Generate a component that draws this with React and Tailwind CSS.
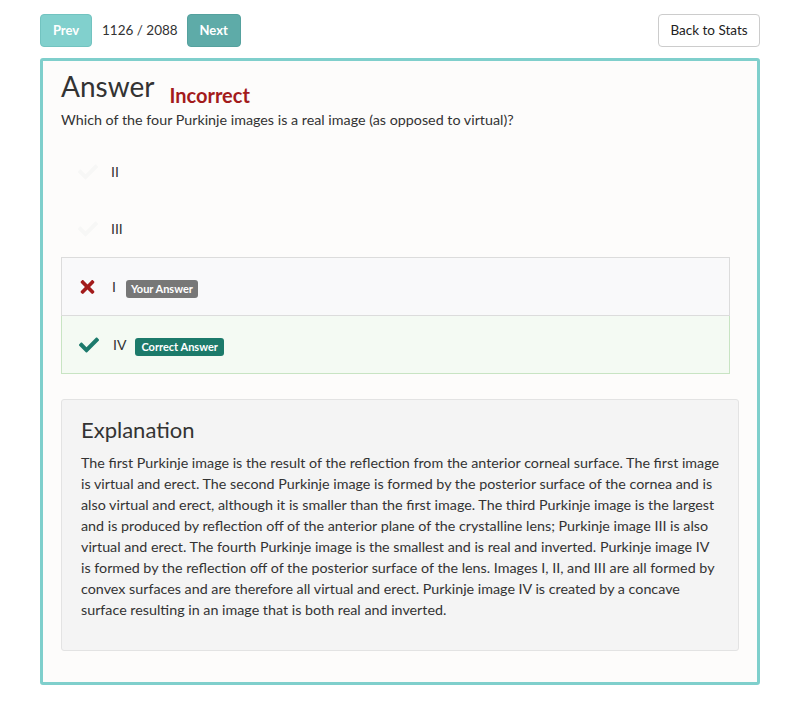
import React from "react";

const Check = ({ className }) => (
  <svg viewBox="0 0 512 512" className={className} fill="currentColor">
    <path d="M173.9 439.4l-166.4-166.4c-10-10-10-26.2 0-36.2l36.2-36.2c10-10 26.2-10 36.2 0L192 312.7 432.1 72.6c10-10 26.2-10 36.2 0l36.2 36.2c10 10 10 26.2 0 36.2L210.1 439.4c-10 10-26.2 10-36.2 0z" />
  </svg>
);

const Times = ({ className }) => (
  <svg viewBox="0 0 352 512" className={className} fill="currentColor">
    <path d="M242.7 256l100.1-100.1c12.3-12.3 12.3-32.2 0-44.5l-22.2-22.2c-12.3-12.3-32.2-12.3-44.5 0L176 189.3 75.9 89.2c-12.3-12.3-32.2-12.3-44.5 0L9.2 111.4c-12.3 12.3-12.3 32.2 0 44.5L109.3 256 9.2 356.1c-12.3 12.3-12.3 32.2 0 44.5l22.2 22.2c12.3 12.3 32.2 12.3 44.5 0L176 322.7l100.1 100.1c12.3 12.3 32.2 12.3 44.5 0l22.2-22.2c12.3-12.3 12.3-32.2 0-44.5L242.7 256z" />
  </svg>
);

export default function App() {
  return (
    <div className="w-[800px] h-[708px] bg-white text-[#333]" style={{ fontFamily: "Lato, 'Noto Sans', sans-serif" }}>
      <div className="px-[40px] pt-[14px]">
        <div className="flex items-center justify-between h-[33px]">
          <div className="flex items-center">
            <button className="h-[33px] w-[52px] rounded-[4px] bg-[#81d0cd] border border-[#72c3c0] text-white text-[13px] font-bold">Prev</button>
            <span className="ml-[10px] text-[13.5px] text-[#333]">1126 / 2088</span>
            <button className="ml-[9px] h-[33px] w-[54px] rounded-[4px] bg-[#5eaba8] border border-[#55a19e] text-white text-[13px] font-bold">Next</button>
          </div>
          <button className="h-[33px] w-[102px] rounded-[4px] bg-white border border-[#cccccc] text-[13.5px] text-[#222]">Back to Stats</button>
        </div>
        <div className="mt-[11px] h-[627px] rounded-[3px] border-[3px] border-[#7fcfcc] bg-[#fdfcfb] pl-[18px] pr-[18px] pt-[9px]">
          <div className="flex items-end">
            <h1 className="text-[28px] leading-[32px] text-[#333]">Answer</h1>
            <span className="ml-[15px] mb-[-7px] text-[20px] leading-[28px] font-bold text-[#a31b1b]">Incorrect</span>
          </div>
          <p className="mt-[8px] text-[14.3px] leading-[20px] text-[#333]">Which of the four Purkinje images is a real image (as opposed to virtual)?</p>
          <div className="mt-[13px] mr-[9px]">
            <div className="h-[57px] flex items-center pl-[17px]">
              <Check className="w-[20px] h-[20px] text-[#f7f7f6]" />
              <span className="ml-[13px] text-[14px] text-[#333]">II</span>
            </div>
            <div className="h-[57px] flex items-center pl-[17px]">
              <Check className="w-[20px] h-[20px] text-[#f7f7f6]" />
              <span className="ml-[13px] text-[14px] text-[#333]">III</span>
            </div>
            <div className="h-[59px] flex items-center pl-[17px] bg-[#f9f9fa] border border-[#dcdcdc]">
              <Times className="w-[15px] h-[20px] text-[#a31b1b] ml-[1px]" />
              <span className="ml-[17px] text-[14px]">I</span>
              <span className="ml-[10px] mt-[4px] px-[5px] h-[18px] leading-[18px] rounded-[3px] bg-[#777] text-white text-[11px] font-bold">Your Answer</span>
            </div>
            <div className="h-[58px] flex items-center pl-[17px] bg-[#f4faf3] border border-[#c8e4c3] border-t-0">
              <Check className="w-[20px] h-[20px] text-[#1c7a6c]" />
              <span className="ml-[14px] text-[14px]">IV</span>
              <span className="ml-[9px] mt-[4px] px-[6px] h-[18px] leading-[18px] rounded-[3px] bg-[#1c7a6a] text-white text-[11px] font-bold">Correct Answer</span>
            </div>
          </div>
          <div className="mt-[25px] h-[252px] rounded-[3px] border border-[#e3e3e3] bg-[#f4f4f4] pl-[19px] pr-[18px] pt-[15px]">
            <h2 className="text-[22px] leading-[30px] text-[#333]">Explanation</h2>
            <p className="mt-[7px] text-[14.3px] leading-[21px] text-[#333]">
              The first Purkinje image is the result of the reflection from the anterior corneal surface. The first image is virtual and erect. The second Purkinje image is formed by the posterior surface of the cornea and is also virtual and erect, although it is smaller than the first image. The third Purkinje image is the largest and is produced by reflection off of the anterior plane of the crystalline lens; Purkinje image III is also virtual and erect. The fourth Purkinje image is the smallest and is real and inverted. Purkinje image IV is formed by the reflection off of the posterior surface of the lens. Images I, II, and III are all formed by convex surfaces and are therefore all virtual and erect. Purkinje image IV is created by a concave surface resulting in an image that is both real and inverted.
            </p>
          </div>
        </div>
      </div>
    </div>
  );
}
